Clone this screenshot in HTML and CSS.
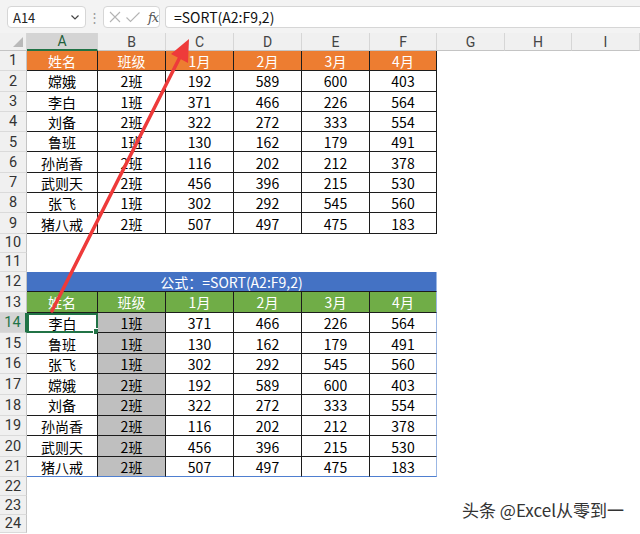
FILE: index.html
```html
<!DOCTYPE html>
<html lang="zh">
<head>
<meta charset="utf-8">
<link rel="stylesheet" href="styles.css">
</head>
<body>
<div class="page">
  <div class="toolbar">
    <div class="namebox"><span>A14</span>
      <svg width="10" height="10" viewBox="0 0 10 10"><path d="M1.5 3.5 L5 7 L8.5 3.5" fill="none" stroke="#444" stroke-width="1.2"/></svg>
    </div>
    <div class="dots">⋮</div>
    <div class="fxbox">
      <svg width="14" height="14" viewBox="0 0 14 14"><path d="M2 2 L12 12 M12 2 L2 12" stroke="#b4b4b4" stroke-width="1.1" fill="none"/></svg>
      <svg width="16" height="14" viewBox="0 0 16 14"><path d="M1.5 7.5 L5.5 11.5 L14.5 2.5" stroke="#b4b4b4" stroke-width="1.1" fill="none"/></svg>
      <span class="fx">fx</span>
    </div>
    <div class="formula">=SORT(A2:F9,2)</div>
  </div>

  <div class="sheet">
    <div class="ch corner"><span class="tri"></span></div>
    <div class="ch sel">A</div><div class="ch">B</div><div class="ch">C</div><div class="ch">D</div><div class="ch">E</div><div class="ch">F</div><div class="ch">G</div><div class="ch">H</div><div class="ch">I</div>

    <div class="rh">1</div><div class="c t or">姓名</div><div class="c t or">班级</div><div class="c t or">1月</div><div class="c t or">2月</div><div class="c t or">3月</div><div class="c t or">4月</div>
    <div class="rh">2</div><div class="c t">嫦娥</div><div class="c t">2班</div><div class="c t">192</div><div class="c t">589</div><div class="c t">600</div><div class="c t">403</div>
    <div class="rh">3</div><div class="c t">李白</div><div class="c t">1班</div><div class="c t">371</div><div class="c t">466</div><div class="c t">226</div><div class="c t">564</div>
    <div class="rh">4</div><div class="c t">刘备</div><div class="c t">2班</div><div class="c t">322</div><div class="c t">272</div><div class="c t">333</div><div class="c t">554</div>
    <div class="rh">5</div><div class="c t">鲁班</div><div class="c t">1班</div><div class="c t">130</div><div class="c t">162</div><div class="c t">179</div><div class="c t">491</div>
    <div class="rh">6</div><div class="c t">孙尚香</div><div class="c t">2班</div><div class="c t">116</div><div class="c t">202</div><div class="c t">212</div><div class="c t">378</div>
    <div class="rh">7</div><div class="c t">武则天</div><div class="c t">2班</div><div class="c t">456</div><div class="c t">396</div><div class="c t">215</div><div class="c t">530</div>
    <div class="rh">8</div><div class="c t">张飞</div><div class="c t">1班</div><div class="c t">302</div><div class="c t">292</div><div class="c t">545</div><div class="c t">560</div>
    <div class="rh">9</div><div class="c t">猪八戒</div><div class="c t">2班</div><div class="c t">507</div><div class="c t">497</div><div class="c t">475</div><div class="c t">183</div>
    <div class="rh">10</div>
    <div class="rh">11</div>
    <div class="rh">12</div><div class="c band">公式：=SORT(A2:F9,2)</div>
    <div class="rh">13</div><div class="c t gr">姓名</div><div class="c t gr">班级</div><div class="c t gr">1月</div><div class="c t gr">2月</div><div class="c t gr">3月</div><div class="c t gr last">4月</div>
    <div class="rh rsel">14</div><div class="c t active">李白<span class="handle"></span></div><div class="c t gy">1班</div><div class="c t">371</div><div class="c t">466</div><div class="c t">226</div><div class="c t last">564</div>
    <div class="rh">15</div><div class="c t">鲁班</div><div class="c t gy">1班</div><div class="c t">130</div><div class="c t">162</div><div class="c t">179</div><div class="c t last">491</div>
    <div class="rh">16</div><div class="c t">张飞</div><div class="c t gy">1班</div><div class="c t">302</div><div class="c t">292</div><div class="c t">545</div><div class="c t last">560</div>
    <div class="rh">17</div><div class="c t">嫦娥</div><div class="c t gy">2班</div><div class="c t">192</div><div class="c t">589</div><div class="c t">600</div><div class="c t last">403</div>
    <div class="rh">18</div><div class="c t">刘备</div><div class="c t gy">2班</div><div class="c t">322</div><div class="c t">272</div><div class="c t">333</div><div class="c t last">554</div>
    <div class="rh">19</div><div class="c t">孙尚香</div><div class="c t gy">2班</div><div class="c t">116</div><div class="c t">202</div><div class="c t">212</div><div class="c t last">378</div>
    <div class="rh">20</div><div class="c t">武则天</div><div class="c t gy">2班</div><div class="c t">456</div><div class="c t">396</div><div class="c t">215</div><div class="c t last">530</div>
    <div class="rh">21</div><div class="c t bot">猪八戒</div><div class="c t gy bot">2班</div><div class="c t bot">507</div><div class="c t bot">497</div><div class="c t bot">475</div><div class="c t bot last">183</div>
    <div class="rh">22</div>
    <div class="rh">23</div>
    <div class="rh">24</div>
  </div>

  <svg class="arrow" width="640" height="534" viewBox="0 0 640 534">
    <line x1="52" y1="311" x2="180" y2="57" stroke="#ee3a3a" stroke-width="3.5" stroke-linecap="round"/>
    <polygon points="189,39 188,63 171,54" fill="#ee3a3a"/>
  </svg>

  <div class="watermark">头条 @Excel从零到一</div>
</div>
</body>
</html>
```
FILE: styles.css
```css
html, body {
  margin: 0;
  padding: 0;
  background: #ffffff;
}
.page {
  position: relative;
  width: 640px;
  height: 534px;
  overflow: hidden;
  font-family: "Noto Sans CJK SC", "Noto Sans", sans-serif;
  color: #000;
}
.toolbar {
  height: 33px;
  box-sizing: border-box;
  padding-top: 6px;
  background: #f3f3f3;
  display: flex;
  align-items: flex-start;
}
.namebox {
  margin-left: 7px;
  width: 79px;
  height: 22px;
  box-sizing: border-box;
  background: #fff;
  border: 1px solid #d6d6d6;
  border-radius: 4px;
  display: flex;
  align-items: center;
  justify-content: space-between;
  padding: 0 5px 0 5px;
  font-size: 13px;
  color: #222;
}
.dots {
  width: 17px;
  text-align: center;
  color: #9a9a9a;
  font-size: 13px;
  line-height: 22px;
}
.fxbox {
  width: 57px;
  height: 22px;
  box-sizing: border-box;
  background: #fff;
  border: 1px solid #d6d6d6;
  border-radius: 4px;
  display: flex;
  align-items: center;
  padding-left: 4px;
  gap: 3px;
}
.fx {
  font-family: "DejaVu Serif", "Liberation Serif", serif;
  font-style: italic;
  font-size: 13px;
  color: #555;
  margin-left: 4px;
  letter-spacing: -1px;
}
.formula {
  flex: 1;
  margin-left: 5px;
  height: 22px;
  box-sizing: border-box;
  background: #fff;
  border: 1px solid #d6d6d6;
  border-right: none;
  border-radius: 4px 0 0 4px;
  font-size: 14px;
  line-height: 20px;
  padding-left: 8px;
  color: #111;
}
.sheet {
  display: grid;
  grid-template-columns: 27px 71px 68px 68px 68px 68px 67px 68px 67px 68px;
  grid-template-rows: 18px repeat(9, 20.3px) 19px 19px 20.6px 20.4px repeat(8, 20.6px) repeat(3, 18.6px);
}
.ch {
  background: #f0f0f0;
  border-right: 1px solid #d6d6d6;
  border-bottom: 1px solid #c4c4c4;
  box-sizing: border-box;
  font-family: Roboto, "Noto Sans", sans-serif;
  font-size: 14px;
  color: #444;
  display: flex;
  align-items: center;
  justify-content: center;
  line-height: 1;
}
.ch.sel {
  background: #d4d4d4;
  color: #1f5f3b;
  border-bottom: 2px solid #217346;
}
.corner {
  position: relative;
}
.tri {
  position: absolute;
  right: 3px;
  bottom: 3px;
  width: 0;
  height: 0;
  border-left: 10px solid transparent;
  border-bottom: 10px solid #b9b9b9;
}
.rh {
  grid-column: 1;
  background: #f0f0f0;
  border-right: 1px solid #c4c4c4;
  border-bottom: 1px solid #dadada;
  box-sizing: border-box;
  font-family: Roboto, "Noto Sans", sans-serif;
  font-size: 14.5px;
  color: #333;
  display: flex;
  align-items: center;
  justify-content: center;
  padding-top: 2px;
  line-height: 1;
}
.rh.rsel {
  background: #d4d4d4;
  color: #217346;
  border-right: 2px solid #217346;
}
.c {
  box-sizing: border-box;
  display: flex;
  align-items: center;
  justify-content: center;
  font-size: 14px;
  line-height: 1;
  padding-top: 1px;
  position: relative;
}
.t {
  border-right: 1px solid #1c1c1c;
  border-bottom: 1px solid #1c1c1c;
}
.or {
  background: #ed7d31;
  color: #fff;
}
.gr {
  background: #70ad47;
  color: #fff;
}
.gy {
  background: #bfbfbf;
}
.band {
  grid-column: span 6;
  background: #4472c4;
  color: #fff;
  border-bottom: 1px solid #1c1c1c;
  border-right: 1px solid #9bb7e4;
}
.last {
  border-right: 1px solid #9bb7e4;
}
.bot {
  border-bottom: 1px solid #4f7fd0;
}
.active {
  border: 2px solid #217346;
}
.handle {
  position: absolute;
  right: -4px;
  bottom: -4px;
  width: 5px;
  height: 5px;
  background: #217346;
  border: 1px solid #fff;
}
.arrow {
  position: absolute;
  left: 0;
  top: 0;
  pointer-events: none;
}
.watermark {
  position: absolute;
  left: 462px;
  top: 499px;
  font-size: 17px;
  line-height: 22px;
  color: #333;
  font-family: "Noto Sans CJK SC", "Noto Sans", sans-serif;
  text-shadow: 0 0 2px #fff;
}
```
